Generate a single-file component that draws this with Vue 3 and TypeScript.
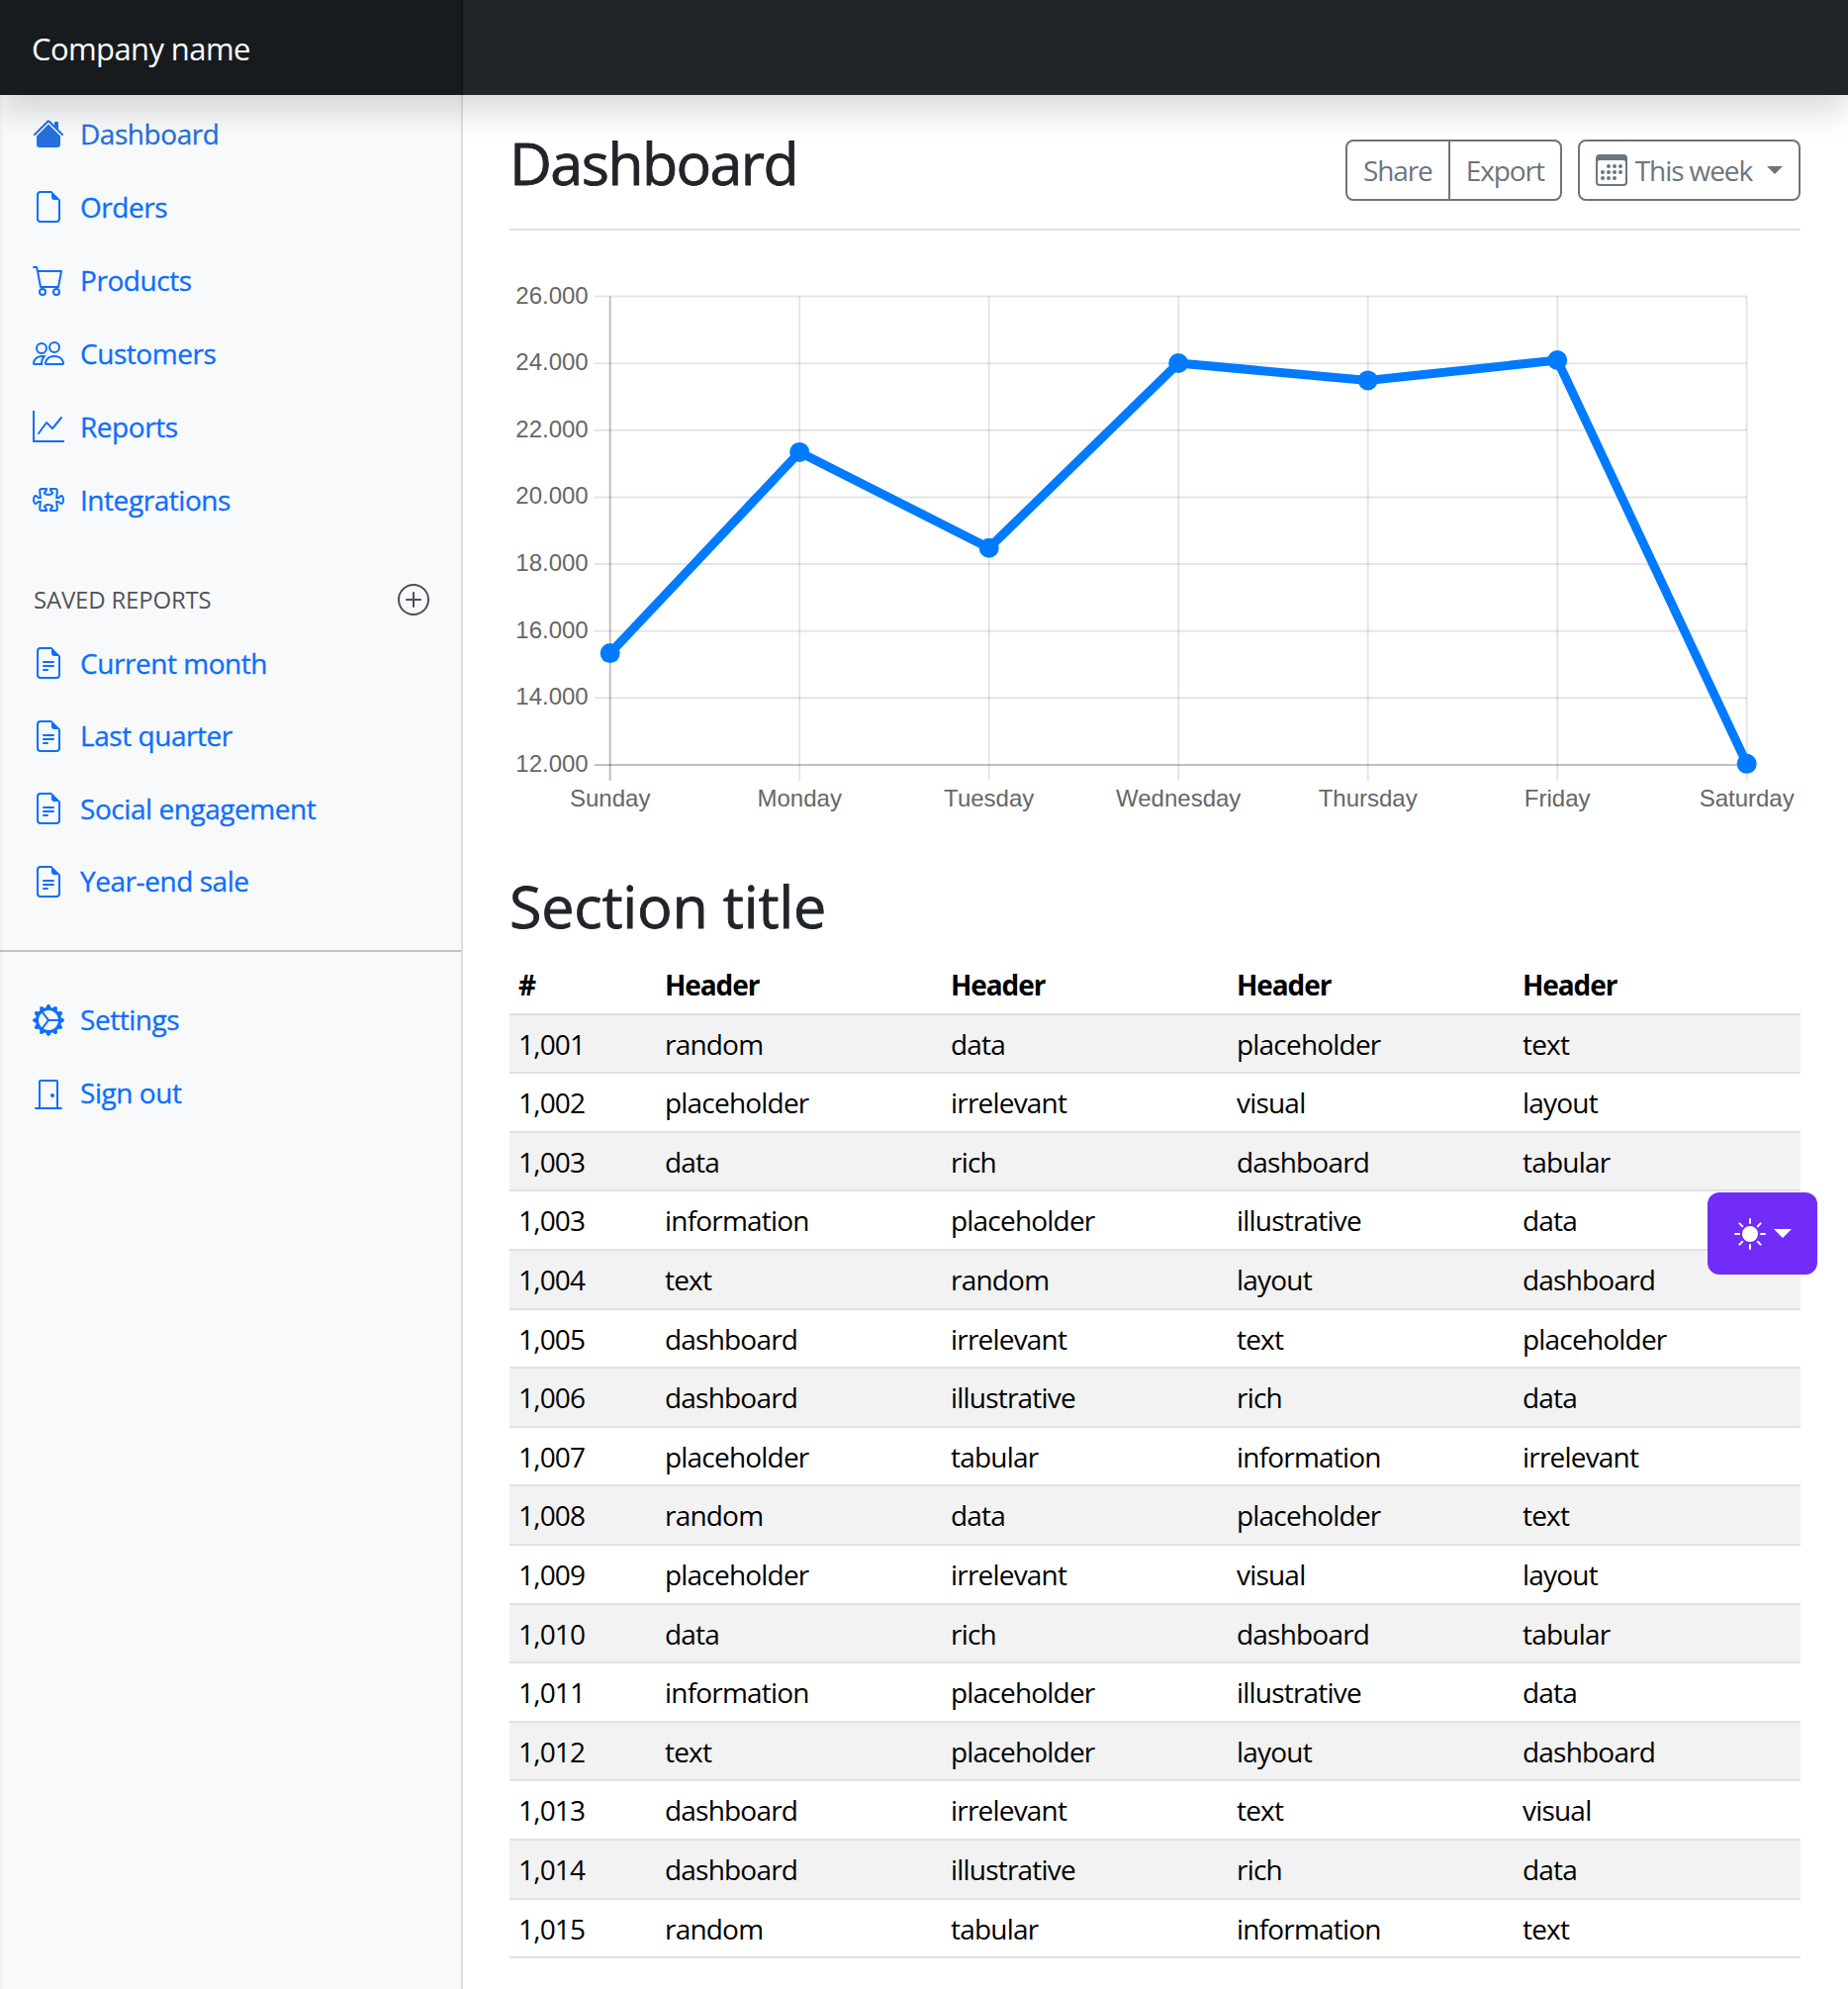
<template>
  <div class="shell">
    <header class="topbar">
      <a class="brand">Company name</a>
    </header>

    <div class="columns">
      <aside class="sidebar">
        <ul class="nav first">
          <li v-for="item in mainLinks" :key="item.label" class="nav-item">
            <a class="nav-link" :class="{ active: item.active }">
              <svg class="bi" :class="{ outline: item.icon === 'puzzle' }" viewBox="0 0 16 16">
                <clipPath v-if="item.icon === 'puzzle'" id="puzzle-clip">
                  <path :d="icons.puzzle[0]" />
                </clipPath>
                <path
                  v-for="d in icons[item.icon]"
                  :key="d"
                  :d="d"
                  :clip-path="item.icon === 'puzzle' ? 'url(#puzzle-clip)' : undefined"
                />
              </svg>
              {{ item.label }}
            </a>
          </li>
        </ul>

        <h6 class="sidebar-heading">
          <span>Saved reports</span>
          <svg class="bi" viewBox="0 0 16 16">
            <path v-for="d in icons.plus" :key="d" :d="d" />
          </svg>
        </h6>
        <ul class="nav saved">
          <li v-for="label in savedLinks" :key="label" class="nav-item">
            <a class="nav-link">
              <svg class="bi" viewBox="0 0 16 16">
                <path v-for="d in icons.fileText" :key="d" :d="d" />
              </svg>
              {{ label }}
            </a>
          </li>
        </ul>

        <hr class="divider" />

        <ul class="nav saved">
          <li v-for="item in footerLinks" :key="item.label" class="nav-item">
            <a class="nav-link">
              <svg class="bi" viewBox="0 0 16 16">
                <path v-for="d in icons[item.icon]" :key="d" :d="d" />
              </svg>
              {{ item.label }}
            </a>
          </li>
        </ul>
      </aside>

      <main class="content">
        <div class="page-head">
          <h1 class="page-title">Dashboard</h1>
          <div class="toolbar">
            <div class="btn-group">
              <button type="button" class="btn">Share</button>
              <button type="button" class="btn">Export</button>
            </div>
            <button type="button" class="btn week">
              <svg class="bi" viewBox="0 0 16 16">
                <path v-for="d in icons.calendar" :key="d" :d="d" />
              </svg>
              This week
              <span class="caret"></span>
            </button>
          </div>
        </div>

        <svg class="chart" viewBox="0 0 1305 551" width="1305" height="551">
          <g v-for="(label, i) in yLabels" :key="label">
            <line class="grid" :class="{ axis: i === yLabels.length - 1 }" :x1="chartLeft - 16" :x2="chartRight" :y1="yAt(i)" :y2="yAt(i)" />
            <text class="tick" :x="chartLeft - 22" :y="yAt(i) + 7" text-anchor="end">{{ label }}</text>
          </g>
          <g v-for="(day, i) in days" :key="day">
            <line class="grid" :class="{ axis: i === 0 }" :x1="xAt(i)" :x2="xAt(i)" :y1="chartTop" :y2="chartBottom + 16" />
            <text class="tick" :x="xAt(i)" :y="chartBottom + 42" text-anchor="middle">{{ day }}</text>
          </g>
          <polyline class="series" :points="seriesPoints" />
          <circle v-for="(v, i) in values" :key="i" class="dot" :cx="xAt(i)" :cy="valueY(v)" r="10" />
        </svg>

        <h2 class="section-title">Section title</h2>
        <table class="data">
          <colgroup>
            <col class="col-id" />
            <col v-for="n in 4" :key="n" class="col-text" />
          </colgroup>
          <thead>
            <tr>
              <th>#</th>
              <th v-for="n in 4" :key="n">Header</th>
            </tr>
          </thead>
          <tbody>
            <tr v-for="row in rows" :key="row.join()">
              <td v-for="(cell, i) in row" :key="i">{{ cell }}</td>
            </tr>
          </tbody>
        </table>
      </main>
    </div>

    <button type="button" class="theme-toggle">
      <svg class="sun" viewBox="0 0 16 16">
        <path v-for="d in icons.sun" :key="d" :d="d" />
      </svg>
      <span class="caret"></span>
    </button>
  </div>
</template>

<script setup lang="ts">
const icons: Record<string, string[]> = {
  home: [
    'M8.707 1.5a1 1 0 0 0-1.414 0L.646 8.146a.5.5 0 0 0 .708.708L8 2.207l6.646 6.647a.5.5 0 0 0 .708-.708L13 5.793V2.5a.5.5 0 0 0-.5-.5h-1a.5.5 0 0 0-.5.5v1.293L8.707 1.5Z',
    'm8 3.293 6 6V13.5a1.5 1.5 0 0 1-1.5 1.5h-9A1.5 1.5 0 0 1 2 13.5V9.293l6-6Z',
  ],
  file: ['M14 4.5V14a2 2 0 0 1-2 2H4a2 2 0 0 1-2-2V2a2 2 0 0 1 2-2h5.5L14 4.5zm-3 0A1.5 1.5 0 0 1 9.5 3V1H4a1 1 0 0 0-1 1v12a1 1 0 0 0 1 1h8a1 1 0 0 0 1-1V4.5h-2z'],
  cart: ['M0 1.5A.5.5 0 0 1 .5 1H2a.5.5 0 0 1 .485.379L2.89 3H14.5a.5.5 0 0 1 .491.592l-1.5 8A.5.5 0 0 1 13 12H4a.5.5 0 0 1-.491-.408L2.01 3.607 1.61 2H.5a.5.5 0 0 1-.5-.5zM3.102 4l1.313 7h8.17l1.313-7H3.102zM5 12a2 2 0 1 0 0 4 2 2 0 0 0 0-4zm7 0a2 2 0 1 0 0 4 2 2 0 0 0 0-4zm-7 1a1 1 0 1 1 0 2 1 1 0 0 1 0-2zm7 0a1 1 0 1 1 0 2 1 1 0 0 1 0-2z'],
  people: ['M15 14s1 0 1-1-1-4-5-4-5 3-5 4 1 1 1 1h8Zm-7.978-1A.261.261 0 0 1 7 12.996c.001-.264.167-1.03.76-1.72C8.312 10.629 9.282 10 11 10c1.717 0 2.687.63 3.24 1.276.593.69.758 1.457.76 1.72l-.008.002a.274.274 0 0 1-.014.002H7.022ZM11 7a2 2 0 1 0 0-4 2 2 0 0 0 0 4Zm3-2a3 3 0 1 1-6 0 3 3 0 0 1 6 0ZM6.936 9.28a5.88 5.88 0 0 0-1.23-.247A7.35 7.35 0 0 0 5 9c-4 0-5 3-5 4 0 .667.333 1 1 1h4.216A2.238 2.238 0 0 1 5 13c0-1.01.377-2.042 1.09-2.904.243-.294.526-.569.846-.816ZM4.92 10A5.493 5.493 0 0 0 4 13H1c0-.26.164-1.03.76-1.724.545-.636 1.492-1.256 3.16-1.275ZM1.5 5.5a3 3 0 1 1 6 0 3 3 0 0 1-6 0Zm3-2a2 2 0 1 0 0 4 2 2 0 0 0 0-4Z'],
  graph: ['M0 0h1v15h15v1H0V0Zm14.817 3.113a.5.5 0 0 1 .07.704l-4.5 5.5a.5.5 0 0 1-.74.037L7.06 6.767l-3.656 5.027a.5.5 0 0 1-.808-.588l4-5.5a.5.5 0 0 1 .758-.06l2.609 2.61 4.15-5.073a.5.5 0 0 1 .704-.07Z'],
  puzzle: ['M3.112 3.645A1.5 1.5 0 0 1 4.605 2H7a.5.5 0 0 1 .5.5v.382c0 .696-.497 1.182-.872 1.469a.459.459 0 0 0-.115.118.113.113 0 0 0-.012.025L6.5 4.5v.003l.003.01c.004.01.014.028.036.053a.86.86 0 0 0 .27.194C7.09 4.9 7.51 5 8 5c.492 0 .912-.1 1.19-.24a.86.86 0 0 0 .271-.194.213.213 0 0 0 .039-.063v-.009a.112.112 0 0 0-.012-.025.459.459 0 0 0-.115-.118c-.375-.287-.872-.773-.872-1.469V2.5A.5.5 0 0 1 9 2h2.395a1.5 1.5 0 0 1 1.493 1.645L12.645 6.5h.237c.195 0 .42-.147.675-.48.21-.274.528-.52.943-.52.568 0 .947.447 1.154.862C15.877 6.807 16 7.387 16 8s-.123 1.193-.346 1.638c-.207.415-.586.862-1.154.862-.415 0-.733-.246-.943-.52-.255-.333-.48-.48-.675-.48h-.237l.243 2.855A1.5 1.5 0 0 1 11.395 14H9a.5.5 0 0 1-.5-.5v-.382c0-.696.497-1.182.872-1.469a.459.459 0 0 0 .115-.118.113.113 0 0 0 .012-.025L9.5 11.5v-.003a.214.214 0 0 0-.039-.064.859.859 0 0 0-.27-.193C8.91 11.1 8.49 11 8 11c-.491 0-.912.1-1.19.24a.859.859 0 0 0-.271.194.214.214 0 0 0-.039.063v.003l.001.006a.113.113 0 0 0 .012.025c.016.027.05.068.115.118.375.287.872.773.872 1.469v.382a.5.5 0 0 1-.5.5H4.605a1.5 1.5 0 0 1-1.493-1.645L3.356 9.5h-.238c-.195 0-.42.147-.675.48-.21.274-.528.52-.943.52-.568 0-.947-.447-1.154-.862C.123 9.193 0 8.613 0 8s.123-1.193.346-1.638C.553 5.947.932 5.5 1.5 5.5c.415 0 .733.246.943.52.255.333.48.48.675.48h.238l-.244-2.855z'],
  plus: [
    'M8 15A7 7 0 1 1 8 1a7 7 0 0 1 0 14zm0 1A8 8 0 1 0 8 0a8 8 0 0 0 0 16z',
    'M8 4a.5.5 0 0 1 .5.5v3h3a.5.5 0 0 1 0 1h-3v3a.5.5 0 0 1-1 0v-3h-3a.5.5 0 0 1 0-1h3v-3A.5.5 0 0 1 8 4z',
  ],
  fileText: [
    'M5.5 7a.5.5 0 0 0 0 1h5a.5.5 0 0 0 0-1h-5zM5 9.5a.5.5 0 0 1 .5-.5h5a.5.5 0 0 1 0 1h-5a.5.5 0 0 1-.5-.5zm0 2a.5.5 0 0 1 .5-.5h2a.5.5 0 0 1 0 1h-2a.5.5 0 0 1-.5-.5z',
    'M9.5 0H4a2 2 0 0 0-2 2v12a2 2 0 0 0 2 2h8a2 2 0 0 0 2-2V4.5L9.5 0zm0 1v2A1.5 1.5 0 0 0 11 4.5h2V14a1 1 0 0 1-1 1H4a1 1 0 0 1-1-1V2a1 1 0 0 1 1-1h5.5z',
  ],
  gear: ['M7.068.727c.243-.97 1.62-.97 1.864 0l.071.286a.96.96 0 0 0 1.622.434l.205-.211c.695-.719 1.888-.03 1.613.931l-.08.284a.96.96 0 0 0 1.187 1.187l.283-.081c.96-.275 1.65.918.931 1.613l-.211.205a.96.96 0 0 0 .434 1.622l.286.071c.97.243.97 1.62 0 1.864l-.286.071a.96.96 0 0 0-.434 1.622l.211.205c.719.695.03 1.888-.931 1.613l-.284-.08a.96.96 0 0 0-1.187 1.187l.081.283c.275.96-.918 1.65-1.613.931l-.205-.211a.96.96 0 0 0-1.622.434l-.071.286c-.243.97-1.62.97-1.864 0l-.071-.286a.96.96 0 0 0-1.622-.434l-.205.211c-.695.719-1.888.03-1.613-.931l.08-.284a.96.96 0 0 0-1.187-1.187l-.283.081c-.96.275-1.65-.918-.931-1.613l.211-.205a.96.96 0 0 0-.434-1.622l-.286-.071c-.97-.243-.97-1.62 0-1.864l.286-.071a.96.96 0 0 0 .434-1.622l-.211-.205c-.719-.695-.03-1.888.931-1.613l.284.08a.96.96 0 0 0 1.187-1.187l-.081-.283c-.275-.96.918-1.65 1.613-.931l.205.211a.96.96 0 0 0 1.622-.434l.071-.286zM12.973 8.5H8.25l-2.834 3.779A4.998 4.998 0 0 0 12.973 8.5zm0-1a4.998 4.998 0 0 0-7.557-3.779l2.834 3.78h4.723zM5.048 3.967c-.03.021-.058.043-.087.065l.087-.065zm-.431.355A4.984 4.984 0 0 0 3.002 8c0 1.455.622 2.765 1.615 3.678L7.375 8 4.617 4.322zm.344 7.646.087.065-.087-.065z'],
  door: [
    'M3 2a1 1 0 0 1 1-1h8a1 1 0 0 1 1 1v13h1.5a.5.5 0 0 1 0 1h-13a.5.5 0 0 1 0-1H3V2zm1 13h8V2H4v13z',
    'M9 9a1 1 0 1 0 2 0 1 1 0 0 0-2 0z',
  ],
  calendar: [
    'M14 0H2a2 2 0 0 0-2 2v12a2 2 0 0 0 2 2h12a2 2 0 0 0 2-2V2a2 2 0 0 0-2-2zM1 3.857C1 3.384 1.448 3 2 3h12c.552 0 1 .384 1 .857v10.286c0 .473-.448.857-1 .857H2c-.552 0-1-.384-1-.857V3.857z',
    'M6.5 7a1 1 0 1 0 0-2 1 1 0 0 0 0 2zm3 0a1 1 0 1 0 0-2 1 1 0 0 0 0 2zm3 0a1 1 0 1 0 0-2 1 1 0 0 0 0 2zm-9 3a1 1 0 1 0 0-2 1 1 0 0 0 0 2zm3 0a1 1 0 1 0 0-2 1 1 0 0 0 0 2zm3 0a1 1 0 1 0 0-2 1 1 0 0 0 0 2zm3 0a1 1 0 1 0 0-2 1 1 0 0 0 0 2zm-9 3a1 1 0 1 0 0-2 1 1 0 0 0 0 2zm3 0a1 1 0 1 0 0-2 1 1 0 0 0 0 2zm3 0a1 1 0 1 0 0-2 1 1 0 0 0 0 2z',
  ],
  sun: ['M8 12a4 4 0 1 0 0-8 4 4 0 0 0 0 8zM8 0a.5.5 0 0 1 .5.5v2a.5.5 0 0 1-1 0v-2A.5.5 0 0 1 8 0zm0 13a.5.5 0 0 1 .5.5v2a.5.5 0 0 1-1 0v-2A.5.5 0 0 1 8 13zm8-5a.5.5 0 0 1-.5.5h-2a.5.5 0 0 1 0-1h2a.5.5 0 0 1 .5.5zM3 8a.5.5 0 0 1-.5.5h-2a.5.5 0 0 1 0-1h2A.5.5 0 0 1 3 8zm10.657-5.657a.5.5 0 0 1 0 .707l-1.414 1.415a.5.5 0 1 1-.707-.708l1.414-1.414a.5.5 0 0 1 .707 0zm-9.193 9.193a.5.5 0 0 1 0 .707L3.05 13.657a.5.5 0 0 1-.707-.707l1.414-1.414a.5.5 0 0 1 .707 0zm9.193 2.121a.5.5 0 0 1-.707 0l-1.414-1.414a.5.5 0 0 1 .707-.707l1.414 1.414a.5.5 0 0 1 0 .707zM4.464 4.465a.5.5 0 0 1-.707 0L2.343 3.05a.5.5 0 1 1 .707-.707l1.414 1.414a.5.5 0 0 1 0 .708z'],
}

const mainLinks = [
  { label: 'Dashboard', icon: 'home', active: true },
  { label: 'Orders', icon: 'file' },
  { label: 'Products', icon: 'cart' },
  { label: 'Customers', icon: 'people' },
  { label: 'Reports', icon: 'graph' },
  { label: 'Integrations', icon: 'puzzle' },
]
const savedLinks = ['Current month', 'Last quarter', 'Social engagement', 'Year-end sale']
const footerLinks = [
  { label: 'Settings', icon: 'gear' },
  { label: 'Sign out', icon: 'door' },
]

// chart geometry, in px inside the svg
const chartLeft = 101.7
const chartRight = 1250.7
const chartTop = 18.5
const chartBottom = 492
const yLabels = ['26.000', '24.000', '22.000', '20.000', '18.000', '16.000', '14.000', '12.000']
const days = ['Sunday', 'Monday', 'Tuesday', 'Wednesday', 'Thursday', 'Friday', 'Saturday']
const values = [15339, 21345, 18483, 24003, 23489, 24092, 12034]

const xAt = (i: number) => chartLeft + (i * (chartRight - chartLeft)) / (days.length - 1)
const yAt = (i: number) => chartTop + (i * (chartBottom - chartTop)) / (yLabels.length - 1)
const valueY = (v: number) => chartBottom - ((v - 12000) / 14000) * (chartBottom - chartTop)
const seriesPoints = values.map((v, i) => `${xAt(i)},${valueY(v)}`).join(' ')

const rows = [
  ['1,001', 'random', 'data', 'placeholder', 'text'],
  ['1,002', 'placeholder', 'irrelevant', 'visual', 'layout'],
  ['1,003', 'data', 'rich', 'dashboard', 'tabular'],
  ['1,003', 'information', 'placeholder', 'illustrative', 'data'],
  ['1,004', 'text', 'random', 'layout', 'dashboard'],
  ['1,005', 'dashboard', 'irrelevant', 'text', 'placeholder'],
  ['1,006', 'dashboard', 'illustrative', 'rich', 'data'],
  ['1,007', 'placeholder', 'tabular', 'information', 'irrelevant'],
  ['1,008', 'random', 'data', 'placeholder', 'text'],
  ['1,009', 'placeholder', 'irrelevant', 'visual', 'layout'],
  ['1,010', 'data', 'rich', 'dashboard', 'tabular'],
  ['1,011', 'information', 'placeholder', 'illustrative', 'data'],
  ['1,012', 'text', 'placeholder', 'layout', 'dashboard'],
  ['1,013', 'dashboard', 'irrelevant', 'text', 'visual'],
  ['1,014', 'dashboard', 'illustrative', 'rich', 'data'],
  ['1,015', 'random', 'tabular', 'information', 'text'],
]
</script>

<style>
body {
  margin: 0;
  background: #fff;
  font-family: "Open Sans", "Noto Sans", sans-serif;
  color: #212529;
}
</style>

<style scoped>
.shell {
  position: relative;
  display: flex;
  flex-direction: column;
  min-height: 100vh;
  letter-spacing: -0.6px;
}

.topbar {
  position: relative;
  z-index: 2;
  height: 96px;
  background: #212529;
  box-shadow: 0 16px 32px rgba(0, 0, 0, 0.15);
}

.brand {
  display: block;
  box-sizing: border-box;
  width: 468px;
  height: 96px;
  padding-left: 32px;
  line-height: 98px;
  font-size: 31px;
  color: #fff;
  background: rgba(0, 0, 0, 0.25);
  box-shadow: inset -2px 0 0 rgba(0, 0, 0, 0.25);
}

.columns {
  flex: 1;
  display: flex;
}

.sidebar {
  box-sizing: border-box;
  width: 468px;
  flex: none;
  background: #f8f9fa;
  box-shadow: inset -2px 0 0 rgba(0, 0, 0, 0.1), inset 2px 0 0 rgba(0, 0, 0, 0.03);
}

.nav {
  list-style: none;
  margin: 0;
  padding: 0;
}

.nav.first {
  padding-top: 2px;
}

.nav-link {
  display: flex;
  align-items: center;
  gap: 16px;
  padding: 16px 32px 16px 33px;
  font-size: 28px;
  font-weight: 500;
  line-height: 42px;
  letter-spacing: -0.45px;
  -webkit-text-stroke: 0.3px currentColor;
  color: #0d6efd;
}

.nav.saved .nav-link {
  line-height: 41.6px;
}

.nav-link.active {
  color: #2470dc;
}

.bi {
  width: 32px;
  height: 32px;
  flex: none;
  fill: currentColor;
}

.bi.outline path {
  fill: none;
  stroke: currentColor;
  stroke-width: 2;
}

.sidebar-heading {
  display: flex;
  align-items: center;
  justify-content: space-between;
  margin: 46px 0 9.5px;
  padding: 0 34px;
  font-size: 24px;
  font-weight: 400;
  line-height: 36px;
  letter-spacing: -0.2px;
  text-transform: uppercase;
  color: rgba(33, 37, 41, 0.8);
}

.divider {
  margin: 32.1px 2px 32.5px 0;
  border: 0;
  border-top: 2px solid rgba(33, 37, 41, 0.25);
}

.content {
  flex: 1;
  min-width: 0;
  padding: 32px 48px 0 47px;
}

.page-head {
  display: flex;
  align-items: center;
  justify-content: space-between;
  padding-bottom: 16px;
  border-bottom: 2px solid #dee2e6;
}

.page-title {
  margin: 0 0 15px;
  padding-top: 1px;
  font-size: 59.2px;
  font-weight: 500;
  line-height: 71px;
  letter-spacing: -1.6px;
  -webkit-text-stroke: 0.8px currentColor;
}

.toolbar {
  display: flex;
  gap: 16px;
}

.btn-group {
  display: flex;
}

.btn {
  display: flex;
  align-items: center;
  gap: 8px;
  box-sizing: border-box;
  height: 62px;
  padding: 8px 16px;
  font-family: inherit;
  font-size: 28px;
  letter-spacing: -1.1px;
  line-height: 42px;
  color: #6c757d;
  background: #fff;
  border: 2px solid #6c757d;
  border-radius: 8px;
}

.btn-group .btn:first-child {
  border-radius: 8px 0 0 8px;
}

.btn-group .btn:last-child {
  margin-left: -2px;
  border-radius: 0 8px 8px 0;
}

.caret {
  display: inline-block;
  margin-left: 7px;
  border-top: 8.4px solid currentColor;
  border-left: 8.4px solid transparent;
  border-right: 8.4px solid transparent;
}

.chart {
  display: block;
  margin: 48px 0;
}

.tick {
  font-family: "Liberation Sans", Arial, sans-serif;
  font-size: 24px;
  letter-spacing: 0;
  fill: #666;
}

.grid {
  stroke: rgba(0, 0, 0, 0.1);
  stroke-width: 2;
}

.grid.axis {
  stroke: rgba(0, 0, 0, 0.25);
}

.series {
  fill: none;
  stroke: #007bff;
  stroke-width: 9;
}

.dot {
  fill: #007bff;
}

.section-title {
  margin: 0 0 15px;
  font-size: 59.2px;
  font-weight: 500;
  line-height: 71px;
  letter-spacing: -0.2px;
  -webkit-text-stroke: 0.8px currentColor;
}

.data {
  width: 1305px;
  table-layout: fixed;
  border-collapse: collapse;
  font-size: 28px;
  line-height: 41.6px;
  letter-spacing: -0.8px;
  color: #000;
}

.col-id {
  width: 149px;
}

.col-text {
  width: 289px;
}

.data th,
.data td {
  padding: 9px 8px 7px;
  text-align: left;
  border-bottom: 2px solid #dee2e6;
}

.data th {
  font-weight: 700;
  letter-spacing: -1.1px;
}

.data th:first-child,
.data td:first-child {
  padding-left: 9px;
}

.data tbody tr:nth-child(odd) {
  background: #f2f2f2;
}

.theme-toggle {
  position: absolute;
  top: 1205px;
  right: 31px;
  z-index: 3;
  display: flex;
  align-items: center;
  justify-content: center;
  gap: 8px;
  box-sizing: border-box;
  width: 111px;
  height: 83px;
  padding: 0;
  color: #fff;
  background: #712cf9;
  border: 0;
  border-radius: 12px;
}

.sun {
  width: 32px;
  height: 32px;
  fill: currentColor;
}

.theme-toggle .caret {
  margin-left: 0;
  border-top-width: 9.5px;
  border-left-width: 9.5px;
  border-right-width: 9.5px;
}
</style>
